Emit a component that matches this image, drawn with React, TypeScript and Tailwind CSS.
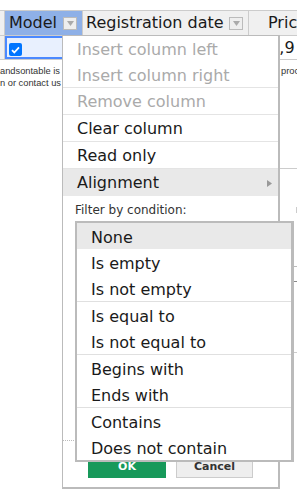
import React from 'react';

const menuItems = [
  { label: 'Insert column left', disabled: true, h: 'h-[26px]', sep: false },
  { label: 'Insert column right', disabled: true, h: 'h-[26px]', sep: true },
  { label: 'Remove column', disabled: true, h: 'h-[27px]', sep: true },
  { label: 'Clear column', disabled: false, h: 'h-[27px]', sep: true },
  { label: 'Read only', disabled: false, h: 'h-[27px]', sep: true },
];

// condition groups, separated by a thin rule
const conditions = [
  ['None', 'Is empty', 'Is not empty'],
  ['Is equal to', 'Is not equal to'],
  ['Begins with', 'Ends with'],
  ['Contains', 'Does not contain'],
];

function HeaderDrop() {
  return (
    <span className="flex h-[13px] w-[14px] shrink-0 items-center justify-center border border-[#bbb] bg-[#eee]">
      <svg width="7" height="5" viewBox="0 0 7 5">
        <path d="M0 0h7L3.5 5z" fill="#aaa" />
      </svg>
    </span>
  );
}

function Checkbox() {
  return (
    <span className="flex h-[13px] w-[13px] items-center justify-center rounded-[2px] bg-[#0075ff]">
      <svg width="9" height="8" viewBox="0 0 9 8">
        <path d="M1 4.2l2.3 2.3L8 1.4" fill="none" stroke="#fff" strokeWidth="1.8" />
      </svg>
    </span>
  );
}

function ColumnMenu() {
  return (
    <div className="absolute left-[62px] top-[35px] h-[454px] w-[218px] border-b-2 border-l border-r-2 border-t border-[#bbb] bg-white text-[16px]">
      <div className="relative flex h-full flex-col">
        {menuItems.map((item) => (
          <div
            key={item.label}
            className={`${item.h} flex items-center pl-[14px] pt-[2px] ${item.sep ? 'border-b border-[#e4e4e4]' : ''} ${
              item.disabled ? 'text-[#aaa]' : 'text-[#1a1a1a]'
            }`}
          >
            {item.label}
          </div>
        ))}
        <div className="flex h-[27px] items-center justify-between bg-[#e9e9e9] pl-[14px] pr-[6px] pt-[1px] text-[#1a1a1a]">
          <span>Alignment</span>
          <svg width="5" height="7" viewBox="0 0 5 7">
            <path d="M0 0l5 3.5L0 7z" fill="#999" />
          </svg>
        </div>
        <div className="h-[25px] pl-[12px] pt-[6px] text-[12px] leading-[16px] text-[#333]">Filter by condition:</div>
        <div className="h-[220px] border-b border-dotted border-[#bbb]" />
        <div className="flex gap-[10px] pl-[25px] pt-[15px]">
          <button className="flex h-[22px] w-[78px] items-center justify-center bg-[#17995a] text-[11px] font-bold text-white">
            OK
          </button>
          <button className="flex h-[22px] w-[77px] items-center justify-center border border-[#ccc] bg-[#eee] text-[11px] font-bold text-[#333]">
            Cancel
          </button>
        </div>

        {/* open condition select */}
        <div className="absolute left-[12px] top-[185px] w-[219px] border-b-2 border-l-2 border-r-[3px] border-t-2 border-[#bbb] bg-white text-[#1a1a1a]">
          {conditions.map((group, gi) => (
            <div key={gi} className={gi < conditions.length - 1 ? 'border-b border-[#e0e0e0]' : ''}>
              {group.map((c) => (
                <div key={c} className={`flex h-[26px] items-center pl-[14px] pt-[4px] ${c === 'None' ? 'bg-[#e9e9e9]' : ''}`}>
                  {c}
                </div>
              ))}
            </div>
          ))}
        </div>
      </div>
    </div>
  );
}

export default function App() {
  return (
    <div className="relative h-[495px] w-[297px] overflow-hidden bg-white font-['DejaVu_Sans',Verdana,sans-serif]">
      <div className="pt-[10px]">
        <div className="flex h-[26px] border-y border-[#ccc] bg-[#f0f0f0] text-[16px] text-[#1a1a1a]">
          <div className="w-[5px] shrink-0 border-r border-[#ccc]" />
          <div className="flex w-[78px] shrink-0 items-center justify-between border-r border-[#ccc] bg-[#8eb0e7] pl-[4px] pr-[5px]">
            <span>Model</span>
            <HeaderDrop />
          </div>
          <div className="flex w-[166px] shrink-0 items-center justify-between border-r border-[#ccc] pl-[3px] pr-[5px]">
            <span className="whitespace-nowrap">Registration date</span>
            <HeaderDrop />
          </div>
          <div className="flex items-center whitespace-nowrap pl-[19px]">Price</div>
        </div>
        <div className="flex h-[24px] border-b border-[#ccc] text-[16px] text-[#1a1a1a]">
          <div className="w-[5px] shrink-0 border-r border-[#ccc] bg-[#f0f0f0]" />
          <div className="flex w-[78px] shrink-0 items-start border-2 border-[#4b89ff] bg-[#e8f0fe] pl-[2px] pt-[5px]">
            <Checkbox />
          </div>
          <div className="w-[166px] shrink-0 border-r border-[#ccc]" />
          <div className="flex items-center whitespace-nowrap pl-[10px]">41,9</div>
        </div>
      </div>

      <div className="flex font-['Liberation_Sans',Arial,sans-serif] text-[9.3px] leading-[12px] text-[#333]">
        <div className="w-[62px] shrink-0 overflow-hidden whitespace-nowrap pt-[5px]">
          <p>andsontable is</p>
          <p>n or contact us</p>
        </div>
        <div className="w-[217px] shrink-0" />
        <div className="w-[18px] shrink-0">
          <p className="h-[17px] whitespace-nowrap pl-[2px] pt-[5px]">proc</p>
          <div className="h-[91px]" />
          <div className="h-[39px] border-t border-[#ccc]" />
          <div className="ml-[17px] h-[6px] w-px bg-[#ccc]" />
          <div className="h-[53px]" />
          <div className="ml-[14px] h-px w-[4px] bg-[#bbb]" />
          <div className="h-[14px]" />
          <div className="ml-[14px] h-px w-[4px] bg-[#888]" />
          <div className="h-[70px]" />
          <div className="h-px bg-[#ccc]" />
        </div>
      </div>

      <ColumnMenu />
    </div>
  );
}
